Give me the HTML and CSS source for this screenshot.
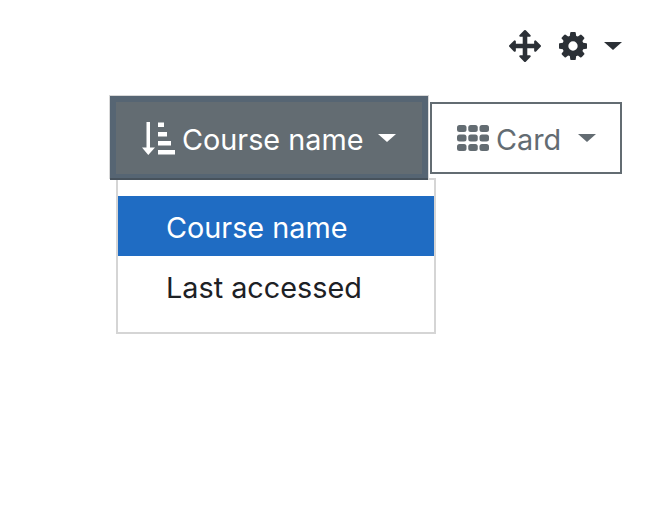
FILE: index.html
```html
<!DOCTYPE html>
<html lang="en">
<head>
    <meta charset="UTF-8">
    <title>Course overview</title>
    <link rel="stylesheet" href="styles.css">
</head>
<body>

    <div class="block-actions">
        <svg class="icon-move" viewBox="0 0 1792 1792"><path d="M1792 896q0 26-19 45l-256 256q-19 19-45 19t-45-19-19-45v-128h-384v384h128q26 0 45 19t19 45-19 45l-256 256q-19 19-45 19t-45-19l-256-256q-19-19-19-45t19-45 45-19h128v-384h-384v128q0 26-19 45t-45 19-45-19l-256-256q-19-19-19-45t19-45l256-256q19-19 45-19t45 19 19 45v128h384v-384h-128q-26 0-45-19t-19-45 19-45l256-256q19-19 45-19t45 19l256 256q19 19 19 45t-19 45-45 19h-128v384h384v-128q0-26 19-45t45-19 45 19l256 256q19 19 19 45z"/></svg>
        <svg class="icon-cog" viewBox="128 128 1536 1536"><path d="M1152 896q0-106-75-181t-181-75-181 75-75 181 75 181 181 75 181-75 75-181zm512-109v222q0 12-8 23t-20 13l-185 28q-19 54-39 91 35 50 107 138 10 12 10 25t-9 23q-27 37-99 108t-94 71q-12 0-26-9l-138-108q-44 23-91 38-16 136-29 186-7 28-36 28h-222q-14 0-24.500-8.500t-11.500-21.500l-28-184q-49-16-90-37l-141 107q-10 9-25 9-14 0-25-11-126-114-165-168-7-10-7-23 0-12 8-23 15-21 51-66.500t54-70.500q-27-50-41-99l-183-27q-13-2-21-12.500t-8-23.500v-222q0-12 8-23t19-13l186-28q14-46 39-92-40-57-107-138-10-12-10-24 0-10 9-23 26-36 98.500-107.500t94.500-71.500q13 0 26 10l138 107q44-23 91-38 16-136 29-186 7-28 36-28h222q14 0 24.500 8.500t11.500 21.500l28 184q49 16 90 37l142-107q9-9 24-9 13 0 25 10 129 119 165 170 7 8 7 22 0 12-8 23-15 21-51 66.500t-54 70.500q26 50 41 98l183 28q13 2 21 12.500t8 23.500z"/></svg>
        <span class="caret caret-dark"></span>
    </div>

    <div class="controls">
        <div class="dropdown">
            <button class="btn btn-active">
                <svg class="icon-sort" viewBox="0 0 33 33">
                    <path d="M4.500 0h3.500v25.500h5L6.250 33 0 25.500h4.500z"/>
                    <rect x="16" y="0.500" width="6" height="4.500"/>
                    <rect x="16" y="10" width="9" height="4.500"/>
                    <rect x="16" y="19" width="13" height="4.500"/>
                    <rect x="16" y="28" width="17" height="4.500"/>
                </svg>
                <span class="btn-label">Course name</span>
                <span class="caret caret-light"></span>
            </button>
            <ul class="menu">
                <li class="menu-item selected">Course name</li>
                <li class="menu-item">Last accessed</li>
            </ul>
        </div>
        <button class="btn btn-outline">
            <svg class="icon-grid" viewBox="0 0 32 26">
                <rect x="0" y="0" width="9.500" height="7" rx="2.500"/>
                <rect x="11.250" y="0" width="9.500" height="7" rx="2.500"/>
                <rect x="22.500" y="0" width="9.500" height="7" rx="2.500"/>
                <rect x="0" y="9.500" width="9.500" height="7" rx="2.500"/>
                <rect x="11.250" y="9.500" width="9.500" height="7" rx="2.500"/>
                <rect x="22.500" y="9.500" width="9.500" height="7" rx="2.500"/>
                <rect x="0" y="19" width="9.500" height="7" rx="2.500"/>
                <rect x="11.250" y="19" width="9.500" height="7" rx="2.500"/>
                <rect x="22.500" y="19" width="9.500" height="7" rx="2.500"/>
            </svg>
            <span class="btn-label">Card</span>
            <span class="caret caret-grey"></span>
        </button>
    </div>

</body>
</html>
```

FILE: styles.css
```css
html, body {
    height: 100%;
}

body {
    margin: 0;
    padding: 0;
    background: #fff;
    font-family: "Inter", "Liberation Sans", sans-serif;
}

.block-actions {
    display: flex;
    align-items: center;
    justify-content: flex-end;
    height: 32px;
    padding: 30px 30px 0 0;
}

.icon-move {
    width: 32px;
    height: 32px;
    fill: #2b3036;
}

.icon-cog {
    width: 28px;
    height: 28px;
    margin-left: 18px;
    fill: #2b3036;
}

.caret {
    display: inline-block;
    border-top: 8px solid;
    border-left: 9px solid transparent;
    border-right: 9px solid transparent;
}

.caret-dark {
    margin-left: 17px;
    color: #2b3036;
}

.caret-light {
    margin-left: 15px;
    color: #fff;
}

.caret-grey {
    margin-left: 17px;
    color: #636c72;
}

.controls {
    display: flex;
    align-items: flex-start;
    margin-top: 34px;
    padding-left: 110px;
}

.dropdown {
    position: relative;
}

.btn {
    display: flex;
    align-items: center;
    box-sizing: border-box;
    font-family: inherit;
    font-size: 28.8px;
    background: #fff;
}

.btn-label {
    padding-top: 2px;
}

/* the focus ring sits over the top edge of the menu */
.btn-active {
    position: relative;
    z-index: 1;
    width: 318px;
    height: 82px;
    padding: 0 0 0 26px;
    color: #fff;
    background: #636c72;
    border: 6px solid #566573;
    border-bottom-width: 4px;
    box-shadow: 0 2px 0 #47525c, 0 0 0 1px #d9d9d9;
}

.btn-outline {
    width: 192px;
    height: 72px;
    margin: 6px 0 0 2px;
    padding: 0 0 0 25px;
    color: #636c72;
    border: 2px solid #636c72;
}

.icon-sort {
    width: 33px;
    height: 33px;
    margin-right: 7px;
    fill: #fff;
}

.icon-grid {
    width: 32px;
    height: 26px;
    margin-right: 7px;
    fill: #636c72;
}

.menu {
    position: absolute;
    top: 82px;
    left: 6px;
    box-sizing: border-box;
    width: 320px;
    height: 156px;
    margin: 0;
    padding: 16px 0;
    list-style: none;
    background: #fff;
    border: 2px solid #d5d5d5;
}

.menu-item {
    height: 60px;
    padding-left: 48px;
    font-size: 28.8px;
    line-height: 64px;
    color: #1d2125;
}

.selected {
    color: #fff;
    background: #1f6cc3;
}
```
